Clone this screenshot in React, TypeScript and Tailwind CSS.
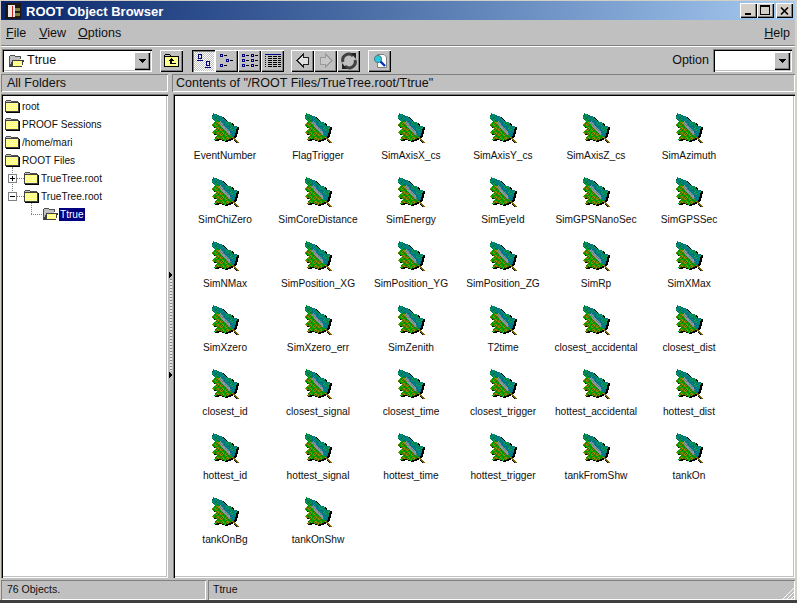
import { ReactNode } from "react";

const raised = "shadow-[inset_1px_1px_0_#ffffff,inset_-1px_-1px_0_#000000,inset_-2px_-2px_0_#808080]";
const sunken = "shadow-[inset_1px_1px_0_#808080,inset_2px_2px_0_#000000,inset_-1px_-1px_0_#ffffff,inset_-2px_-2px_0_#c0c0c0]";
const thinSunken = "shadow-[inset_1px_1px_0_#808080,inset_-1px_-1px_0_#ffffff]";

const names = [
  "EventNumber", "FlagTrigger", "SimAxisX_cs", "SimAxisY_cs", "SimAxisZ_cs", "SimAzimuth",
  "SimChiZero", "SimCoreDistance", "SimEnergy", "SimEyeId", "SimGPSNanoSec", "SimGPSSec",
  "SimNMax", "SimPosition_XG", "SimPosition_YG", "SimPosition_ZG", "SimRp", "SimXMax",
  "SimXzero", "SimXzero_err", "SimZenith", "T2time", "closest_accidental", "closest_dist",
  "closest_id", "closest_signal", "closest_time", "closest_trigger", "hottest_accidental", "hottest_dist",
  "hottest_id", "hottest_signal", "hottest_time", "hottest_trigger", "tankFromShw", "tankOn",
  "tankOnBg", "tankOnShw",
];

const outline: [number, number][] = [
  [3, 3], [8, 5], [13, 7], [16, 11], [21, 12], [23, 16], [27, 16], [26, 22], [24, 27], [20, 29],
  [15, 31], [10, 29], [4, 30], [7, 25], [2, 23], [6, 18], [1, 15], [5, 12], [2, 8],
];

function inLeaf(px: number, py: number) {
  let inside = false;
  for (let i = 0, j = outline.length - 1; i < outline.length; j = i++) {
    const [xi, yi] = outline[i];
    const [xj, yj] = outline[j];
    if (yi > py !== yj > py && px < ((xj - xi) * (py - yi)) / (yj - yi) + xi) inside = !inside;
  }
  return inside;
}

// blotchy palette picked per pixel, so the leaf looks like the old 16 colour bitmap
function leafColor(x: number, y: number) {
  const h = (x * 7 + y * 13 + x * y * 3) % 5;
  const d = ((x - 5) * 23 - (y - 7) * 20) / 30.5;
  const along = x + y;
  if (x < 8 && y < 11) return ["#00a040", "#008040", "#00a040", "#008080", "#006040"][h];
  if (Math.abs(d) < 1.4 && along > 20 && along < 44) return ["#8898a0", "#708890", "#9098a0", "#8898a0", "#608080"][h];
  if (d > 0) return d > 4 ? ["#00a050", "#008060", "#008040", "#008080", "#20a060"][h] : ["#008080", "#007088", "#008890", "#007080", "#008080"][h];
  return ["#808000", "#008000", "#a09000", "#00a000", "#607000"][h];
}

const leafPixels: Record<string, string> = {};
const leafShadow: string[] = [];
for (let y = 0; y < 34; y++) {
  for (let x = 0; x < 30; x++) {
    const px = `M${x} ${y}h1v1h-1z`;
    if (inLeaf(x + 0.5, y + 0.5)) {
      const c = leafColor(x, y);
      leafPixels[c] = (leafPixels[c] ?? "") + px;
    } else if (inLeaf(x - 1.5, y - 0.5) || inLeaf(x - 0.5, y - 0.5)) {
      leafShadow.push(px);
    }
  }
}

function Leaf() {
  return (
    <svg width="30" height="34" viewBox="0 0 30 34" shapeRendering="crispEdges">
      <path d={leafShadow.join("")} fill="#000" />
      {Object.entries(leafPixels).map(([c, d]) => (
        <path key={c} d={d} fill={c} />
      ))}
      <path d="M23 27h1v1h1v1h1v1h1v1h1v1h1v1h-2v-1h-1v-1h-1v-1h-1v-1h-1v-1h-1z" fill="#806000" />
      <path d="M24 30h1v1h1v1h1v1h-1v-1h-1v-1h-1z" fill="#000" />
    </svg>
  );
}

// folder body, soft two tone dither
function Dither({ x, y, w, h }: { x: number; y: number; w: number; h: number }) {
  let d = "";
  for (let j = 0; j < h; j++) {
    for (let i = 0; i < w; i++) {
      if ((i + j) % 2 === 0) d += `M${x + i} ${y + j}h1v1h-1z`;
    }
  }
  return (
    <>
      <rect x={x} y={y} width={w} height={h} fill="#ffff70" />
      <path d={d} fill="#ffffb0" />
    </>
  );
}

function Folder({ open = false }: { open?: boolean }) {
  return (
    <svg width="16" height="14" viewBox="0 0 16 14" shapeRendering="crispEdges" className="shrink-0">
      {open ? (
        <>
          <path d="M1.5 12.5 V2.5 L2.5 1.5 H6.5 L7.5 2.5 H12.5 V5" fill="#c0c0c0" stroke="#505050" />
          <path d="M2 12.5 L4.5 6.5 H15.5 L13.5 12.5 Z" fill="#404040" stroke="#404040" />
          <Dither x={5} y={7} w={9} h={5} />
        </>
      ) : (
        <>
          <path d="M1.5 4 V2.5 L2.5 1.5 H6.5 L7.5 2.5 H13.5 V4" fill="#c0c0c0" stroke="#505050" />
          <rect x="1.5" y="3.5" width="13" height="9" fill="none" stroke="#404040" />
          <Dither x={2} y={4} w={12} h={8} />
          <path d="M15.5 4 V13.5 H2" stroke="#000" fill="none" />
        </>
      )}
    </svg>
  );
}

function Arrow() {
  return (
    <svg width="7" height="4" viewBox="0 0 7 4" shapeRendering="crispEdges">
      <polygon points="0,0 7,0 3.5,4" fill="#000" />
    </svg>
  );
}

function ComboButton() {
  return (
    <div className={`w-[16px] h-[18px] bg-[#c0c0c0] flex items-center justify-center ${raised}`}>
      <Arrow />
    </div>
  );
}

function ToolButton({ pressed = false, children }: { pressed?: boolean; children: ReactNode }) {
  return (
    <div
      className={`w-[23px] h-[22px] flex items-center justify-center ${
        pressed
          ? "bg-[repeating-conic-gradient(#c0c0c0_0_25%,#ffffff_0_50%)] bg-[length:2px_2px] shadow-[inset_1px_1px_0_#000000,inset_2px_2px_0_#808080,inset_-1px_-1px_0_#ffffff]"
          : `bg-[#c0c0c0] ${raised}`
      }`}
    >
      {children}
    </div>
  );
}

const navy = "#000080";

function LargeIconsGlyph() {
  return (
    <svg width="16" height="16" viewBox="0 0 16 16" shapeRendering="crispEdges" fill="none" stroke={navy}>
      <rect x="2.5" y="1.5" width="3" height="4" />
      <path d="M1 7.5 H7" />
      <rect x="10.5" y="8.5" width="3" height="4" />
      <path d="M9 14.5 H15" />
    </svg>
  );
}

function SmallIconsGlyph() {
  return (
    <svg width="16" height="16" viewBox="0 0 16 16" shapeRendering="crispEdges" fill="none">
      <rect x="1.5" y="1.5" width="2" height="2" stroke={navy} />
      <path d="M5 2.5 H8" stroke="#000" />
      <rect x="7.5" y="6.5" width="2" height="2" stroke={navy} />
      <path d="M11 7.5 H14" stroke="#000" />
      <rect x="1.5" y="11.5" width="2" height="2" stroke={navy} />
      <path d="M5 12.5 H8" stroke="#000" />
    </svg>
  );
}

function ListGlyph() {
  return (
    <svg width="18" height="16" viewBox="0 0 18 16" shapeRendering="crispEdges" fill="none">
      {[1, 6, 11].map((y) => (
        <g key={y}>
          <rect x="1.5" y={y + 0.5} width="2" height="2" stroke={navy} />
          <path d={`M5 ${y + 1.5} H8`} stroke="#000" />
          <rect x="10.5" y={y + 0.5} width="2" height="2" stroke={navy} />
          <path d={`M14 ${y + 1.5} H17`} stroke="#000" />
        </g>
      ))}
    </svg>
  );
}

function DetailsGlyph() {
  return (
    <svg width="18" height="16" viewBox="0 0 18 16" shapeRendering="crispEdges" fill="none">
      <path d="M1 1.5 H17" stroke={navy} />
      {[3, 5, 7, 9, 11, 13].map((y) => (
        <g key={y}>
          <path d={`M1 ${y + 0.5} H2`} stroke={navy} />
          <path d={`M4 ${y + 0.5} H17`} stroke="#000" strokeDasharray="4 1" />
        </g>
      ))}
    </svg>
  );
}

function NavArrow({ dir, disabled = false }: { dir: "left" | "right"; disabled?: boolean }) {
  return (
    <svg width="14" height="15" viewBox="0 0 14 15" shapeRendering="crispEdges">
      <polygon
        points={dir === "left" ? "7.5,1 1,7.5 7.5,14 7.5,11 12.5,11 12.5,4 7.5,4" : "6.5,1 13,7.5 6.5,14 6.5,11 1.5,11 1.5,4 6.5,4"}
        fill={disabled ? "#c8c8c8" : "#e0e0e0"}
        stroke={disabled ? "#9a9a9a" : "#202020"}
      />
    </svg>
  );
}

function RefreshGlyph() {
  return (
    <svg width="18" height="18" viewBox="0 0 18 18" fill="none">
      <path d="M3 10 A6 6 0 0 1 13 4" stroke="#404040" strokeWidth="3" />
      <path d="M15 8 A6 6 0 0 1 5 14" stroke="#404040" strokeWidth="3" />
      <polygon points="11,1 16,1 16,7" fill="#202020" />
      <polygon points="7,17 2,17 2,11" fill="#202020" />
    </svg>
  );
}

function SearchGlyph() {
  return (
    <svg width="16" height="16" viewBox="0 0 16 16">
      <path d="M5.5 1.5 H12 L14.5 4 V14.5 H5.5 Z" fill="#fff" stroke="#808080" />
      <circle cx="6" cy="6" r="3.6" fill="#30c8d8" stroke="#408090" />
      <path d="M8.5 8.5 L13 13" stroke="#0030c0" strokeWidth="2.4" />
    </svg>
  );
}

function UpFolderGlyph() {
  return (
    <svg width="17" height="15" viewBox="0 0 17 15" shapeRendering="crispEdges">
      <path d="M1.5 4 V2.5 L2.5 1.5 H6.5 L7.5 2.5 H8" fill="none" stroke="#000" />
      <rect x="1.5" y="3.5" width="14" height="10" fill="none" stroke="#000" />
      <Dither x={2} y={4} w={13} h={9} />
      <path d="M8 5 L5 8 H7 V11 H13 V10 H9 V8 H11 Z" fill="#000" />
    </svg>
  );
}

function TreeRow({ text, indent, open, selected }: { text: string; indent: number; open?: boolean; selected?: boolean }) {
  return (
    <div className="h-[18px] flex items-center" style={{ paddingLeft: indent }}>
      <Folder open={open} />
      <span className={`ml-[1px] px-[1px] leading-[13px] ${selected ? "bg-[#000080] text-white" : ""}`}>{text}</span>
    </div>
  );
}

function Expander({ top, plus }: { top: number; plus: boolean }) {
  return (
    <div
      className="absolute left-[7px] w-[9px] h-[9px] bg-white border border-[#808080] flex items-center justify-center"
      style={{ top }}
    >
      <div className="relative w-[5px] h-[1px] bg-black">
        {plus && <div className="absolute left-[2px] top-[-2px] w-[1px] h-[5px] bg-black" />}
      </div>
    </div>
  );
}

function Dotted({ left, top, w, h }: { left: number; top: number; w: number; h: number }) {
  return (
    <div
      className={`absolute border-[#808080] border-dotted ${w > 1 ? "border-t" : "border-l"}`}
      style={{ left, top, width: w, height: h }}
    />
  );
}

export default function App() {
  return (
    <div className="w-[797px] h-[603px] overflow-hidden flex flex-col bg-[#d4d0c8] text-[#101010] font-['Liberation_Sans',Arial,sans-serif] text-[10.1px] pl-[1px] pr-[2px] pt-[1px]">
      {/* title bar */}
      <div className="h-[19px] shrink-0 flex items-center bg-gradient-to-r from-[#0a246a] to-[#a6caf0] pl-[4px] pr-[2px]">
        <svg width="16" height="16" viewBox="0 0 16 16" shapeRendering="crispEdges" className="shrink-0">
          <rect width="16" height="16" fill="#201810" />
          <rect x="3" y="2" width="7" height="12" fill="#e8e8e8" />
          <rect x="7" y="3" width="1" height="11" fill="#d02020" />
          <rect x="10" y="5" width="5" height="3" fill="#808040" />
          <rect x="10" y="10" width="5" height="3" fill="#808040" />
        </svg>
        <span className="ml-[5px] text-white font-bold text-[13px] leading-none pt-[1px]">ROOT Object Browser</span>
        <div className="ml-auto flex">
          {["min", "max"].map((b) => (
            <div key={b} className={`w-[17px] h-[15px] bg-[#d4d0c8] relative ${raised}`}>
              {b === "min" ? (
                <div className="absolute left-[5px] bottom-[3px] w-[6px] h-[2px] bg-black" />
              ) : (
                <div className="absolute left-[3px] top-[2px] w-[10px] h-[10px] border border-black border-t-2" />
              )}
            </div>
          ))}
          <div className={`ml-[2px] w-[17px] h-[15px] bg-[#d4d0c8] flex items-center justify-center ${raised}`}>
            <svg width="9" height="8" viewBox="0 0 9 8" fill="none" stroke="#000" strokeWidth="1.6">
              <path d="M1 0.5 L8 7.5 M8 0.5 L1 7.5" />
            </svg>
          </div>
        </div>
      </div>

      <div className="flex-1 min-h-0 flex flex-col bg-[#c0c0c0]">
        {/* menu */}
        <div className="h-[25px] shrink-0 flex items-center px-[5px] pt-[1px] text-[12.5px]">
          <span className="mr-[13px]"><u>F</u>ile</span>
          <span className="mr-[12px]"><u>V</u>iew</span>
          <span><u>O</u>ptions</span>
          <span className="ml-auto"><u>H</u>elp</span>
        </div>
        <div className="h-[2px] shrink-0 border-t border-[#808080] bg-white" />

        {/* toolbar */}
        <div className="h-[27px] shrink-0 flex items-center pl-[1px] pr-[3px]">
          <div className={`w-[150px] h-[23px] bg-white flex items-center pl-[6px] pr-[2px] text-[12.5px] ${sunken}`}>
            <Folder open />
            <span className="ml-[3px]">Ttrue</span>
            <div className="ml-auto"><ComboButton /></div>
          </div>
          <div className="ml-[8px]"><ToolButton><UpFolderGlyph /></ToolButton></div>
          <div className="ml-[9px] flex">
            <ToolButton pressed><LargeIconsGlyph /></ToolButton>
            <ToolButton><SmallIconsGlyph /></ToolButton>
            <ToolButton><ListGlyph /></ToolButton>
            <ToolButton><DetailsGlyph /></ToolButton>
          </div>
          <div className="ml-[7px] flex">
            <ToolButton><NavArrow dir="left" /></ToolButton>
            <ToolButton><NavArrow dir="right" disabled /></ToolButton>
            <ToolButton><RefreshGlyph /></ToolButton>
          </div>
          <div className="ml-[8px]"><ToolButton><SearchGlyph /></ToolButton></div>
          <span className="ml-auto mr-[4px] text-[12.5px]">Option</span>
          <div className={`w-[79px] h-[23px] bg-white flex items-center justify-end pr-[2px] ${sunken}`}>
            <ComboButton />
          </div>
        </div>

        {/* headers */}
        <div className="h-[18px] shrink-0 flex text-[12.5px]">
          <div className={`w-[167px] flex items-center pl-[6px] ${thinSunken}`}>All Folders</div>
          <div className="w-[4px]" />
          <div className={`flex-1 flex items-center pl-[4px] ${thinSunken}`}>Contents of "/ROOT Files/TrueTree.root/Ttrue"</div>
        </div>

        {/* panels */}
        <div className="flex-1 min-h-0 flex mt-[2px]">
          <div className={`relative w-[167px] bg-white pt-[3px] pl-[3px] ${sunken}`}>
            <Dotted left={11} top={73} w={1} h={28} />
            <Dotted left={16} top={84} w={7} h={1} />
            <Dotted left={16} top={102} w={7} h={1} />
            <Dotted left={30} top={109} w={1} h={11} />
            <Dotted left={30} top={120} w={11} h={1} />
            <Expander top={80} plus />
            <Expander top={98} plus={false} />
            <TreeRow text="root" indent={0} />
            <TreeRow text="PROOF Sessions" indent={0} />
            <TreeRow text="/home/mari" indent={0} />
            <TreeRow text="ROOT Files" indent={0} />
            <TreeRow text="TrueTree.root" indent={19} />
            <TreeRow text="TrueTree.root" indent={19} />
            <TreeRow text="Ttrue" indent={38} open selected />
          </div>

          {/* splitter */}
          <div className="w-[5px] flex flex-col items-center pt-[177px]">
            <svg width="5" height="8" viewBox="0 0 5 8" shapeRendering="crispEdges">
              <path d="M1 0 L4 4 L1 8 Z" fill="#000" />
            </svg>
            <div className="w-[2px] h-[92px] bg-[repeating-linear-gradient(#808080_0_1px,#e8e8e8_1px_3px)]" />
            <svg width="5" height="8" viewBox="0 0 5 8" shapeRendering="crispEdges">
              <path d="M1 0 L4 4 L1 8 Z" fill="#000" />
            </svg>
          </div>

          <div className={`flex-1 bg-white pt-[16px] pl-[6px] ${sunken}`}>
            <div className="grid grid-cols-[92px_94px_92px_92px_94px_92px] auto-rows-[64px]">
              {names.map((n) => (
                <div key={n} className="flex flex-col items-center">
                  <Leaf />
                  <span className="mt-[6px] leading-[12px] text-[10.2px] whitespace-nowrap">{n}</span>
                </div>
              ))}
            </div>
          </div>
        </div>

        {/* status bar */}
        <div className="h-[20px] shrink-0 flex mt-[2px] gap-[2px] text-[10.5px]">
          <div className={`w-[205px] flex items-center pl-[6px] ${thinSunken}`}>76 Objects.</div>
          <div className={`relative flex-1 flex items-center pl-[5px] ${thinSunken}`}>
            Ttrue
            <svg width="13" height="13" viewBox="0 0 13 13" className="absolute right-0 bottom-0" shapeRendering="crispEdges">
              {[0, 4, 8].map((o) => (
                <path key={o} d={`M${13} ${o} L${o} 13`} stroke="#fff" strokeWidth="1.4" />
              ))}
            </svg>
          </div>
        </div>
      </div>
      <div className="h-[3px] shrink-0 bg-[#404040] ml-[-1px] mr-[-2px]" />
    </div>
  );
}
